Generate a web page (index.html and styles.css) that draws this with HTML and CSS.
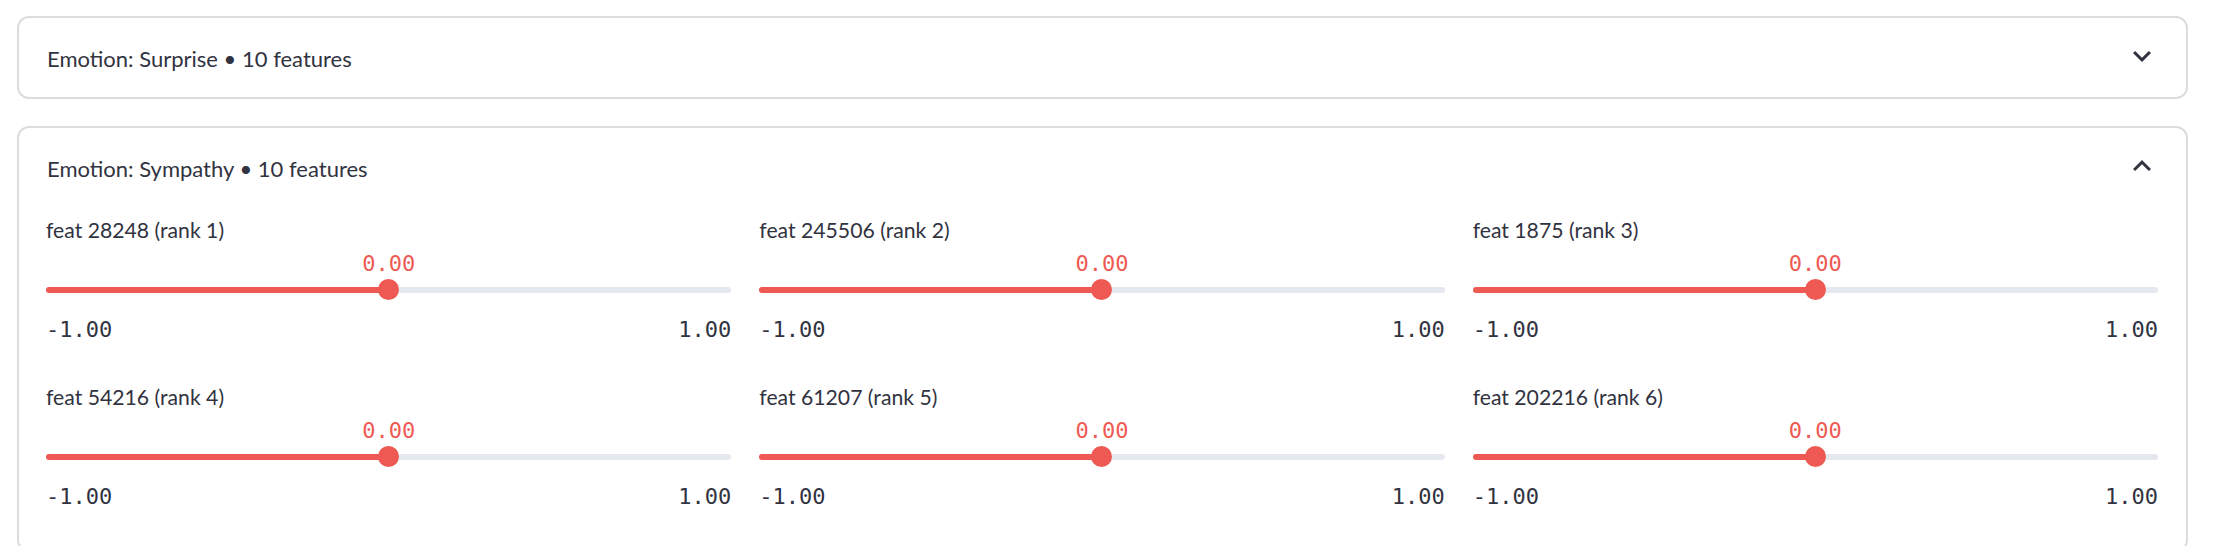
FILE: index.html
```html
<!DOCTYPE html>
<html lang="en">
<head>
<meta charset="utf-8">
<title>Emotion features</title>
<link rel="stylesheet" href="styles.css">
</head>
<body>
<main class="page">
  <section class="expander">
    <header class="exp-header">
      <span class="exp-title">Emotion: Surprise • 10 features</span>
      <svg class="chev" viewBox="0 0 24 24" width="36" height="36"><path d="M16.59 8.59L12 13.17 7.41 8.59 6 10l6 6 6-6z"/></svg>
    </header>
  </section>

  <section class="expander">
    <header class="exp-header">
      <span class="exp-title">Emotion: Sympathy • 10 features</span>
      <svg class="chev" viewBox="0 0 24 24" width="36" height="36"><path d="M12 8l-6 6 1.41 1.41L12 10.83l4.59 4.58L18 14z"/></svg>
    </header>
    <div class="exp-body">
      <div class="slider">
        <div class="s-label">feat 28248 (rank 1)</div>
        <div class="s-value">0.00</div>
        <div class="s-track"><div class="s-rail"><div class="s-fill" style="width:50%"></div></div><div class="s-thumb" style="left:50%"></div></div>
        <div class="s-ticks"><span>-1.00</span><span>1.00</span></div>
      </div>
      <div class="slider">
        <div class="s-label">feat 245506 (rank 2)</div>
        <div class="s-value">0.00</div>
        <div class="s-track"><div class="s-rail"><div class="s-fill" style="width:50%"></div></div><div class="s-thumb" style="left:50%"></div></div>
        <div class="s-ticks"><span>-1.00</span><span>1.00</span></div>
      </div>
      <div class="slider">
        <div class="s-label">feat 1875 (rank 3)</div>
        <div class="s-value">0.00</div>
        <div class="s-track"><div class="s-rail"><div class="s-fill" style="width:50%"></div></div><div class="s-thumb" style="left:50%"></div></div>
        <div class="s-ticks"><span>-1.00</span><span>1.00</span></div>
      </div>
      <div class="slider">
        <div class="s-label">feat 54216 (rank 4)</div>
        <div class="s-value">0.00</div>
        <div class="s-track"><div class="s-rail"><div class="s-fill" style="width:50%"></div></div><div class="s-thumb" style="left:50%"></div></div>
        <div class="s-ticks"><span>-1.00</span><span>1.00</span></div>
      </div>
      <div class="slider">
        <div class="s-label">feat 61207 (rank 5)</div>
        <div class="s-value">0.00</div>
        <div class="s-track"><div class="s-rail"><div class="s-fill" style="width:50%"></div></div><div class="s-thumb" style="left:50%"></div></div>
        <div class="s-ticks"><span>-1.00</span><span>1.00</span></div>
      </div>
      <div class="slider">
        <div class="s-label">feat 202216 (rank 6)</div>
        <div class="s-value">0.00</div>
        <div class="s-track"><div class="s-rail"><div class="s-fill" style="width:50%"></div></div><div class="s-thumb" style="left:50%"></div></div>
        <div class="s-ticks"><span>-1.00</span><span>1.00</span></div>
      </div>
    </div>
  </section>
</main>
</body>
</html>
```

FILE: styles.css
```css
html, body {
  margin: 0;
  padding: 0;
  height: 100%;
  overflow: hidden;
  background: #ffffff;
}

body {
  font-family: "Lato", "Liberation Sans", sans-serif;
  color: #31333f;
}

.page {
  display: flex;
  flex-direction: column;
  gap: 27px;
  padding: 16px 32px 0 17px;
}

.expander {
  border: 2px solid #dcdcdf;
  border-radius: 12px;
}

.exp-header {
  height: 79px;
  display: flex;
  align-items: center;
  justify-content: space-between;
  padding: 0 26px 0 28px;
}

.exp-title {
  font-size: 22px;
  line-height: 30px;
  padding-top: 3px;
}

.chev {
  fill: #31333f;
  margin-top: -4px;
  display: block;
}

.exp-body {
  display: grid;
  grid-template-columns: repeat(3, 1fr);
  column-gap: 28px;
  row-gap: 39px;
  padding: 8px 28px 40px 27px;
}

.slider {
  display: flex;
  flex-direction: column;
}

.s-label {
  font-size: 21.2px;
  line-height: 31px;
  height: 31px;
}

.s-value {
  margin-top: 6px;
  font-family: "DejaVu Sans Mono", "Liberation Mono", monospace;
  font-size: 22px;
  line-height: 24px;
  color: #ee5a53;
  text-align: center;
}

.s-track {
  position: relative;
  margin-top: 3px;
  height: 21px;
  display: flex;
  align-items: center;
}

.s-rail {
  flex: 1;
  height: 6px;
  border-radius: 3px;
  background: #e5e8ef;
  overflow: hidden;
}

.s-fill {
  height: 100%;
  background: #ee5a53;
}

.s-thumb {
  position: absolute;
  top: 0;
  width: 21px;
  height: 21px;
  margin-left: -10.5px;
  border-radius: 50%;
  background: #ee5a53;
}

.s-ticks {
  margin-top: 16px;
  display: flex;
  justify-content: space-between;
  font-family: "DejaVu Sans Mono", "Liberation Mono", monospace;
  font-size: 22px;
  line-height: 27px;
}
```
